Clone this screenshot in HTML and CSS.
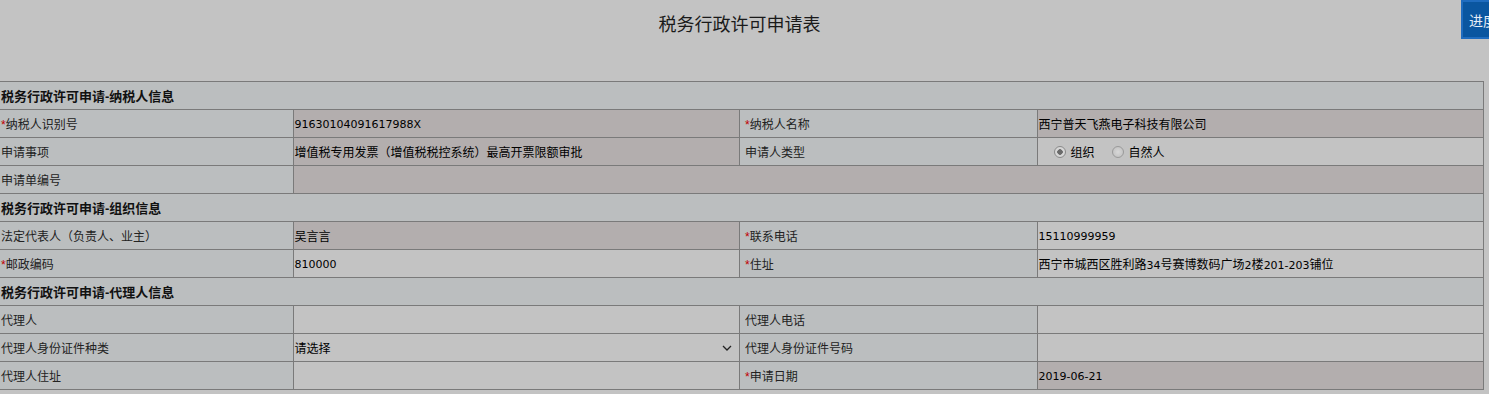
FILE: index.html
```html
<!DOCTYPE html>
<html lang="zh-CN">
<head>
    <meta charset="UTF-8">
    <meta name="viewport" content="width=device-width, initial-scale=1.0">
    <title>税务行政许可申请表</title>
    <link rel="stylesheet" href="styles.css">
</head>
<body>
    <div class="page-title">税务行政许可申请表</div>
    <button class="progress-btn">进度查询</button>

    <table class="form-table">
        <colgroup>
            <col class="col-label">
            <col class="col-value">
            <col class="col-label">
            <col class="col-value">
        </colgroup>
        <tr class="section">
            <td colspan="4">税务行政许可申请-纳税人信息</td>
        </tr>
        <tr>
            <td class="label"><span class="req">*</span>纳税人识别号</td>
            <td class="value readonly"><span class="num">91630104091617988X</span></td>
            <td class="label"><span class="req">*</span>纳税人名称</td>
            <td class="value readonly">西宁普天飞燕电子科技有限公司</td>
        </tr>
        <tr>
            <td class="label">申请事项</td>
            <td class="value readonly">增值税专用发票（增值税税控系统）最高开票限额审批</td>
            <td class="label">申请人类型</td>
            <td class="value">
                <div class="radios">
                    <label class="radio"><span class="dot checked"></span>组织</label>
                    <label class="radio"><span class="dot"></span>自然人</label>
                </div>
            </td>
        </tr>
        <tr>
            <td class="label">申请单编号</td>
            <td class="value readonly" colspan="3"></td>
        </tr>
        <tr class="section">
            <td colspan="4">税务行政许可申请-组织信息</td>
        </tr>
        <tr>
            <td class="label">法定代表人（负责人、业主）</td>
            <td class="value readonly">吴言言</td>
            <td class="label"><span class="req">*</span>联系电话</td>
            <td class="value"><span class="num">15110999959</span></td>
        </tr>
        <tr>
            <td class="label"><span class="req">*</span>邮政编码</td>
            <td class="value"><span class="num">810000</span></td>
            <td class="label"><span class="req">*</span>住址</td>
            <td class="value">西宁市城西区胜利路<span class="num">34</span>号赛博数码广场<span class="num">2</span>楼<span class="num">201-203</span>铺位</td>
        </tr>
        <tr class="section">
            <td colspan="4">税务行政许可申请-代理人信息</td>
        </tr>
        <tr>
            <td class="label">代理人</td>
            <td class="value"></td>
            <td class="label">代理人电话</td>
            <td class="value"></td>
        </tr>
        <tr>
            <td class="label">代理人身份证件种类</td>
            <td class="value">
                <div class="select">
                    <span>请选择</span>
                    <svg width="10" height="6" viewBox="0 0 10 6"><path d="M1 1 L5 5 L9 1" fill="none" stroke="#222" stroke-width="1.3"/></svg>
                </div>
            </td>
            <td class="label">代理人身份证件号码</td>
            <td class="value"></td>
        </tr>
        <tr>
            <td class="label">代理人住址</td>
            <td class="value"></td>
            <td class="label"><span class="req">*</span>申请日期</td>
            <td class="value readonly"><span class="num">2019-06-21</span></td>
        </tr>
    </table>
</body>
</html>
```

FILE: styles.css
```css
body {
    margin: 0;
    background: #c3c3c3;
    font-family: "Liberation Sans", "Noto Sans CJK SC", sans-serif;
    font-size: 12px;
    color: #1a1a1a;
    overflow: hidden;
}
.page-title {
    height: 81px;
    box-sizing: border-box;
    padding-top: 14px;
    padding-right: 10px;
    line-height: 22px;
    text-align: center;
    font-size: 18px;
    color: #1a1a1a;
}
.progress-btn {
    position: absolute;
    top: 0;
    left: 1461px;
    width: 70px;
    height: 39px;
    padding: 0 0 0 6px;
    text-align: left;
    background: #0a56a0;
    border: 2px solid #1f6cbf;
    color: #e6edf5;
    font-family: "Noto Sans CJK SC", sans-serif;
    font-size: 14px;
}
.form-table {
    width: 1489px;
    margin-left: -5px;
    border-collapse: collapse;
    table-layout: fixed;
}
.col-label {
    width: 20%;
}
.col-value {
    width: 30%;
}
.form-table td {
    height: 27px;
    padding: 0;
    border: 1px solid #7a7a7a;
    vertical-align: middle;
    white-space: nowrap;
    overflow: hidden;
}
.section td {
    background: #bbbebf;
    padding-left: 5px;
    font-size: 13px;
    font-weight: bold;
    color: #111;
}
.label {
    background: #bbbebf;
    padding-left: 5px !important;
    color: #222;
}
.req {
    color: #c00000;
}
.value {
    background: #c3c3c3;
    padding-left: 1px !important;
    color: #000;
}
.value.readonly {
    background: #b3aeae;
}
.num {
    font-family: "DejaVu Sans", sans-serif;
    font-size: 11px;
}
.radios {
    display: flex;
    align-items: center;
    gap: 17px;
    padding-left: 15px;
}
.radio {
    display: flex;
    align-items: center;
    gap: 5px;
}
.dot {
    width: 12px;
    height: 12px;
    box-sizing: border-box;
    border-radius: 50%;
    border: 1px solid #9a9a9a;
    background: radial-gradient(circle, #d8d8d8 0%, #bdbdbd 100%);
}
.dot.checked {
    background: radial-gradient(circle, #6a6a6a 0 2.5px, #d6d6d6 3px);
    border-color: #8a8a8a;
}
.select {
    display: flex;
    align-items: center;
    justify-content: space-between;
    padding-right: 7px;
}
```
